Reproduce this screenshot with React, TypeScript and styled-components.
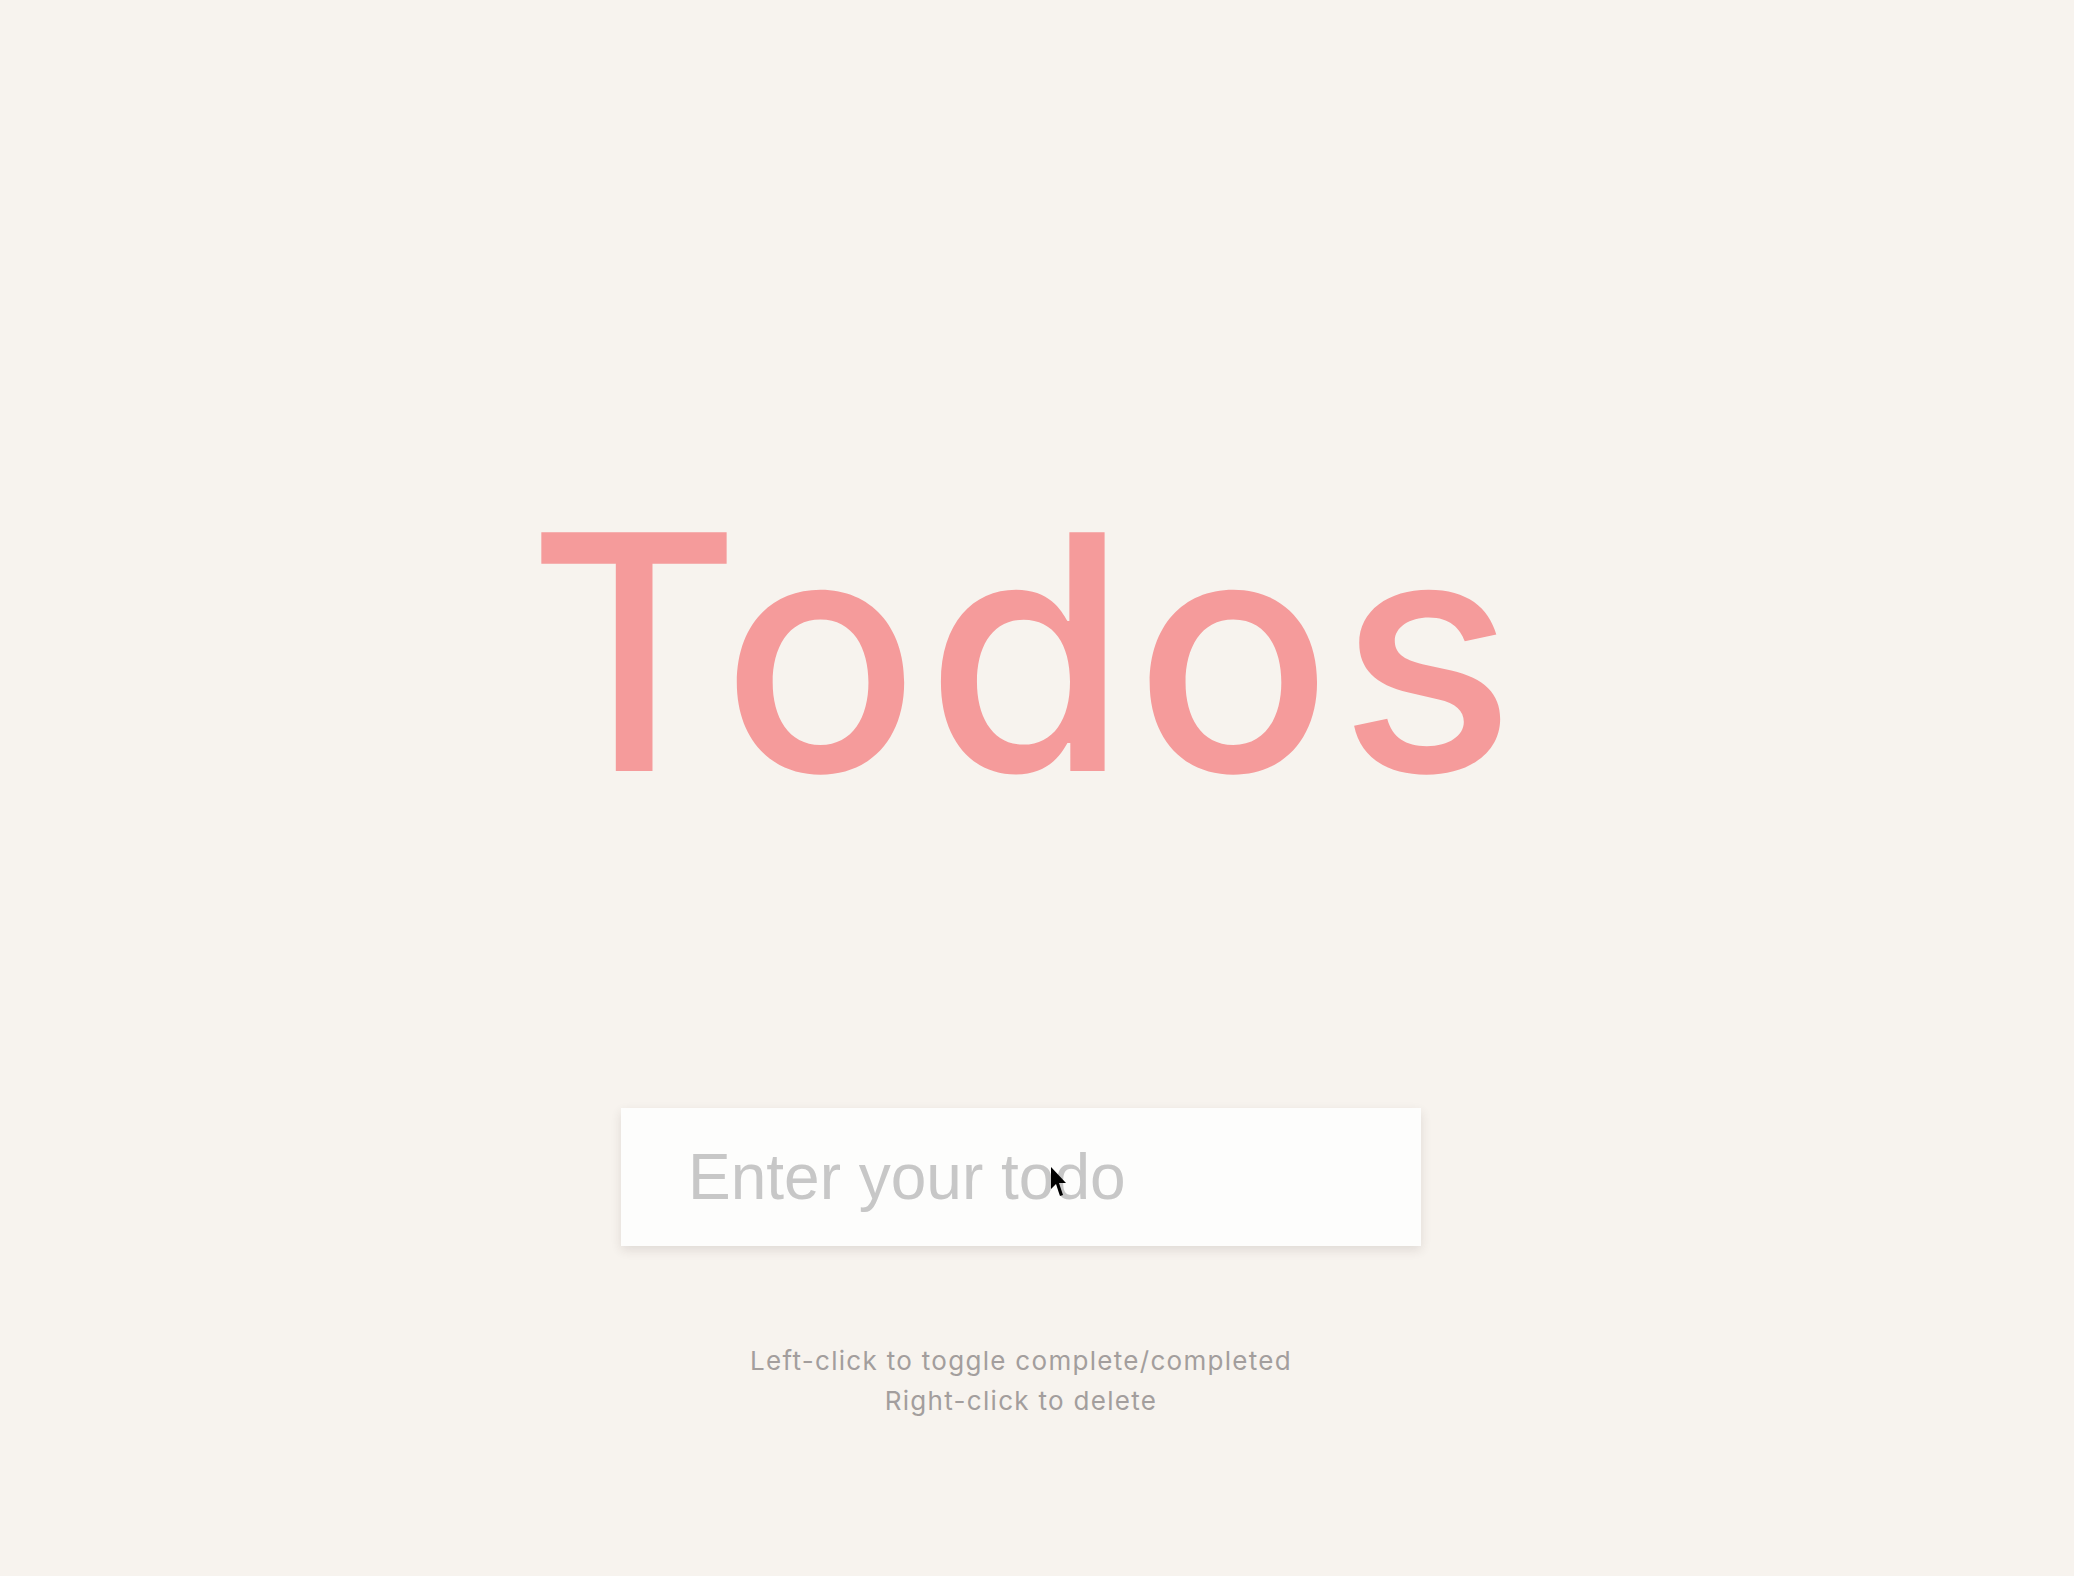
import React from "react";
import styled, { createGlobalStyle } from "styled-components";

const Global = createGlobalStyle`
  html, body {
    margin: 0;
    padding: 0;
    background: #f7f3ee;
  }
  body {
    font-family: Inter, "Liberation Sans", sans-serif;
  }
`;

const Page = styled.main`
  min-height: 1576px;
  box-sizing: border-box;
  padding: 488px 32px 0 0;
  display: flex;
  flex-direction: column;
  align-items: center;
`;

const Title = styled.h1`
  margin: 0;
  padding-left: 6px;
  font-family: Inter, "Liberation Sans", sans-serif;
  font-weight: 500;
  font-size: 328px;
  line-height: 328px;
  color: #f59b9b;
  letter-spacing: 6px;
`;

const Form = styled.form`
  position: relative;
  margin-top: 292px;
  width: 800px;
  height: 138px;
`;

const Input = styled.input`
  width: 100%;
  height: 100%;
  box-sizing: border-box;
  border: none;
  outline: none;
  padding: 0 0 0 67px;
  background: #fdfdfc;
  box-shadow: 0 4px 10px rgba(60, 40, 40, 0.12);
  font-family: "Liberation Sans", Arial, sans-serif;
  font-size: 64px;
  color: #444;
  &::placeholder {
    color: #c7c7c7;
  }
`;

const Cursor = styled.svg`
  position: absolute;
  left: 430px;
  top: 59px;
  width: 16px;
  height: 30px;
  pointer-events: none;
`;

const Hints = styled.div`
  margin-top: 95px;
  display: flex;
  flex-direction: column;
  align-items: center;
`;

const Hint = styled.p`
  margin: 0;
  font-family: Inter, "Liberation Sans", sans-serif;
  font-size: 26px;
  line-height: 40px;
  color: #a39e9d;
  letter-spacing: 1.3px;
`;

export default function App() {
  return (
    <>
      <Global />
      <Page>
        <Title>Todos</Title>
        <Form onSubmit={(e) => e.preventDefault()}>
          <Input placeholder="Enter your todo" />
          <Cursor viewBox="0 0 16 30">
            <path d="M0 0 L0 22 L5 17 L9 29 L12 28 L8 16 L15 16 Z" fill="#000" />
          </Cursor>
        </Form>
        <Hints>
          <Hint>Left-click to toggle complete/completed</Hint>
          <Hint>Right-click to delete</Hint>
        </Hints>
      </Page>
    </>
  );
}
